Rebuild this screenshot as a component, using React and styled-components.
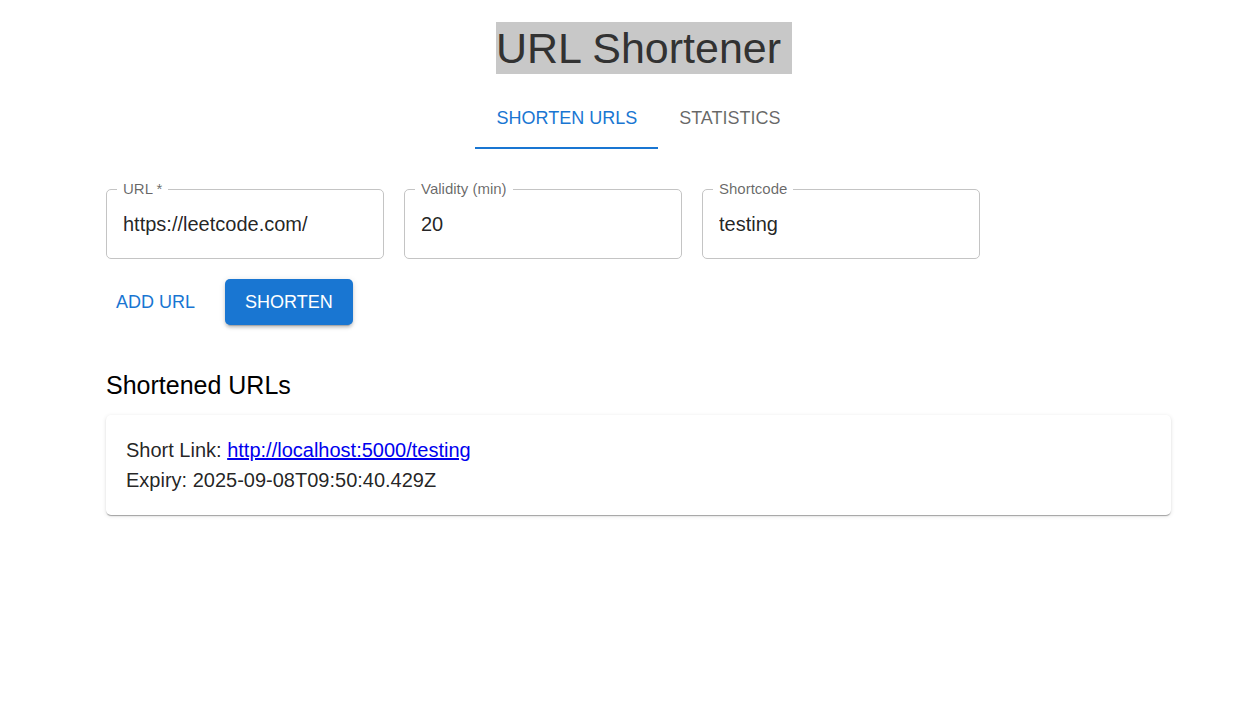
import React, { useState } from "react";
import styled, { createGlobalStyle } from "styled-components";

const GlobalStyle = createGlobalStyle`
  *, *::before, *::after { box-sizing: border-box; }
  body {
    margin: 0;
    background: #fff;
    color: rgba(0, 0, 0, 0.87);
    font-family: "Liberation Sans", Arial, sans-serif;
    font-size: 20px;
    line-height: 30px;
  }
`;

const Page = styled.main`
  padding: 22px 85px 40px 106px;
`;

const Title = styled.h1`
  margin: 0;
  font-size: 43px;
  font-weight: 400;
  line-height: 52px;
  text-align: center;
`;

const Highlight = styled.span`
  display: inline-block;
  margin-right: -11px;
  padding-right: 11px;
  background: #c8c8c8;
  color: #323232;
`;

const Tabs = styled.div`
  display: flex;
  justify-content: center;
  margin-top: 15px;
`;

const Tab = styled.button`
  height: 60px;
  padding: 0 21px;
  border: 0;
  border-bottom: 2px solid ${(p) => (p.$active ? "#1976d2" : "transparent")};
  background: none;
  color: ${(p) => (p.$active ? "#1976d2" : "rgba(0, 0, 0, 0.6)")};
  font-family: inherit;
  font-size: 18px;
  line-height: 22px;
  text-transform: uppercase;
  cursor: pointer;
`;

const Form = styled.form`
  display: flex;
  flex-direction: column;
  gap: 20px;
  margin-top: 40px;
`;

const Fields = styled.div`
  display: flex;
  flex-wrap: wrap;
  gap: 20px;
`;

const Field = styled.div`
  position: relative;
  flex: 0 1 278px;
`;

const FieldLabel = styled.label`
  position: absolute;
  top: -10px;
  left: 11px;
  padding: 0 6px;
  background: #fff;
  color: rgba(0, 0, 0, 0.6);
  font-size: 15px;
  line-height: 20px;
`;

const Input = styled.input`
  display: block;
  width: 100%;
  height: 70px;
  padding: 0 16px;
  border: 1px solid #c4c4c4;
  border-radius: 5px;
  background: none;
  color: inherit;
  font-family: inherit;
  font-size: 20px;
  outline: none;

  &:focus {
    border-color: #1976d2;
  }
`;

const Actions = styled.div`
  display: flex;
  gap: 20px;
`;

const Button = styled.button`
  height: 46px;
  padding: 0 ${(p) => (p.$contained ? 20 : 10)}px;
  border: 0;
  border-radius: 5px;
  background: ${(p) => (p.$contained ? "#1976d2" : "transparent")};
  color: ${(p) => (p.$contained ? "#fff" : "#1976d2")};
  box-shadow: ${(p) =>
    p.$contained
      ? "0 4px 1px -3px rgba(0,0,0,0.2), 0 3px 3px 0 rgba(0,0,0,0.14), 0 1px 6px 0 rgba(0,0,0,0.12)"
      : "none"};
  font-family: inherit;
  font-size: 18px;
  text-transform: uppercase;
  cursor: pointer;
`;

const Results = styled.section`
  margin-top: 40px;
`;

const SectionTitle = styled.h2`
  margin: 0 0 10px;
  color: #000;
  font-size: 25px;
  font-weight: 400;
  line-height: 40px;
`;

const Card = styled.article`
  padding: 20px;
  border-radius: 5px;
  background: #fff;
  box-shadow: 0 2px 1px -1px rgba(0, 0, 0, 0.2), 0 1px 1px 0 rgba(0, 0, 0, 0.14),
    0 1px 4px 0 rgba(0, 0, 0, 0.12);
`;

const Line = styled.p`
  margin: 0;
`;

const Link = styled.a`
  color: #0000ee;
`;

const fields = [
  { id: "url", label: "URL *", value: "https://leetcode.com/" },
  { id: "validity", label: "Validity (min)", value: "20" },
  { id: "shortcode", label: "Shortcode", value: "testing" },
];

const tabs = ["Shorten URLs", "Statistics"];

export default function App() {
  const [active, setActive] = useState(0);

  return (
    <>
      <GlobalStyle />
      <Page>
        <Title>
          <Highlight>URL Shortener</Highlight>
        </Title>
        <Tabs role="tablist">
          {tabs.map((name, i) => (
            <Tab
              key={name}
              type="button"
              role="tab"
              aria-selected={i === active}
              $active={i === active}
              onClick={() => setActive(i)}
            >
              {name}
            </Tab>
          ))}
        </Tabs>
        <Form onSubmit={(e) => e.preventDefault()}>
          <Fields>
            {fields.map((f) => (
              <Field key={f.id}>
                <Input id={f.id} type="text" defaultValue={f.value} />
                <FieldLabel htmlFor={f.id}>{f.label}</FieldLabel>
              </Field>
            ))}
          </Fields>
          <Actions>
            <Button type="button">Add URL</Button>
            <Button type="submit" $contained>
              Shorten
            </Button>
          </Actions>
        </Form>
        <Results>
          <SectionTitle>Shortened URLs</SectionTitle>
          <Card>
            <Line>
              Short Link: <Link href="http://localhost:5000/testing">http://localhost:5000/testing</Link>
            </Line>
            <Line>Expiry: 2025-09-08T09:50:40.429Z</Line>
          </Card>
        </Results>
      </Page>
    </>
  );
}
